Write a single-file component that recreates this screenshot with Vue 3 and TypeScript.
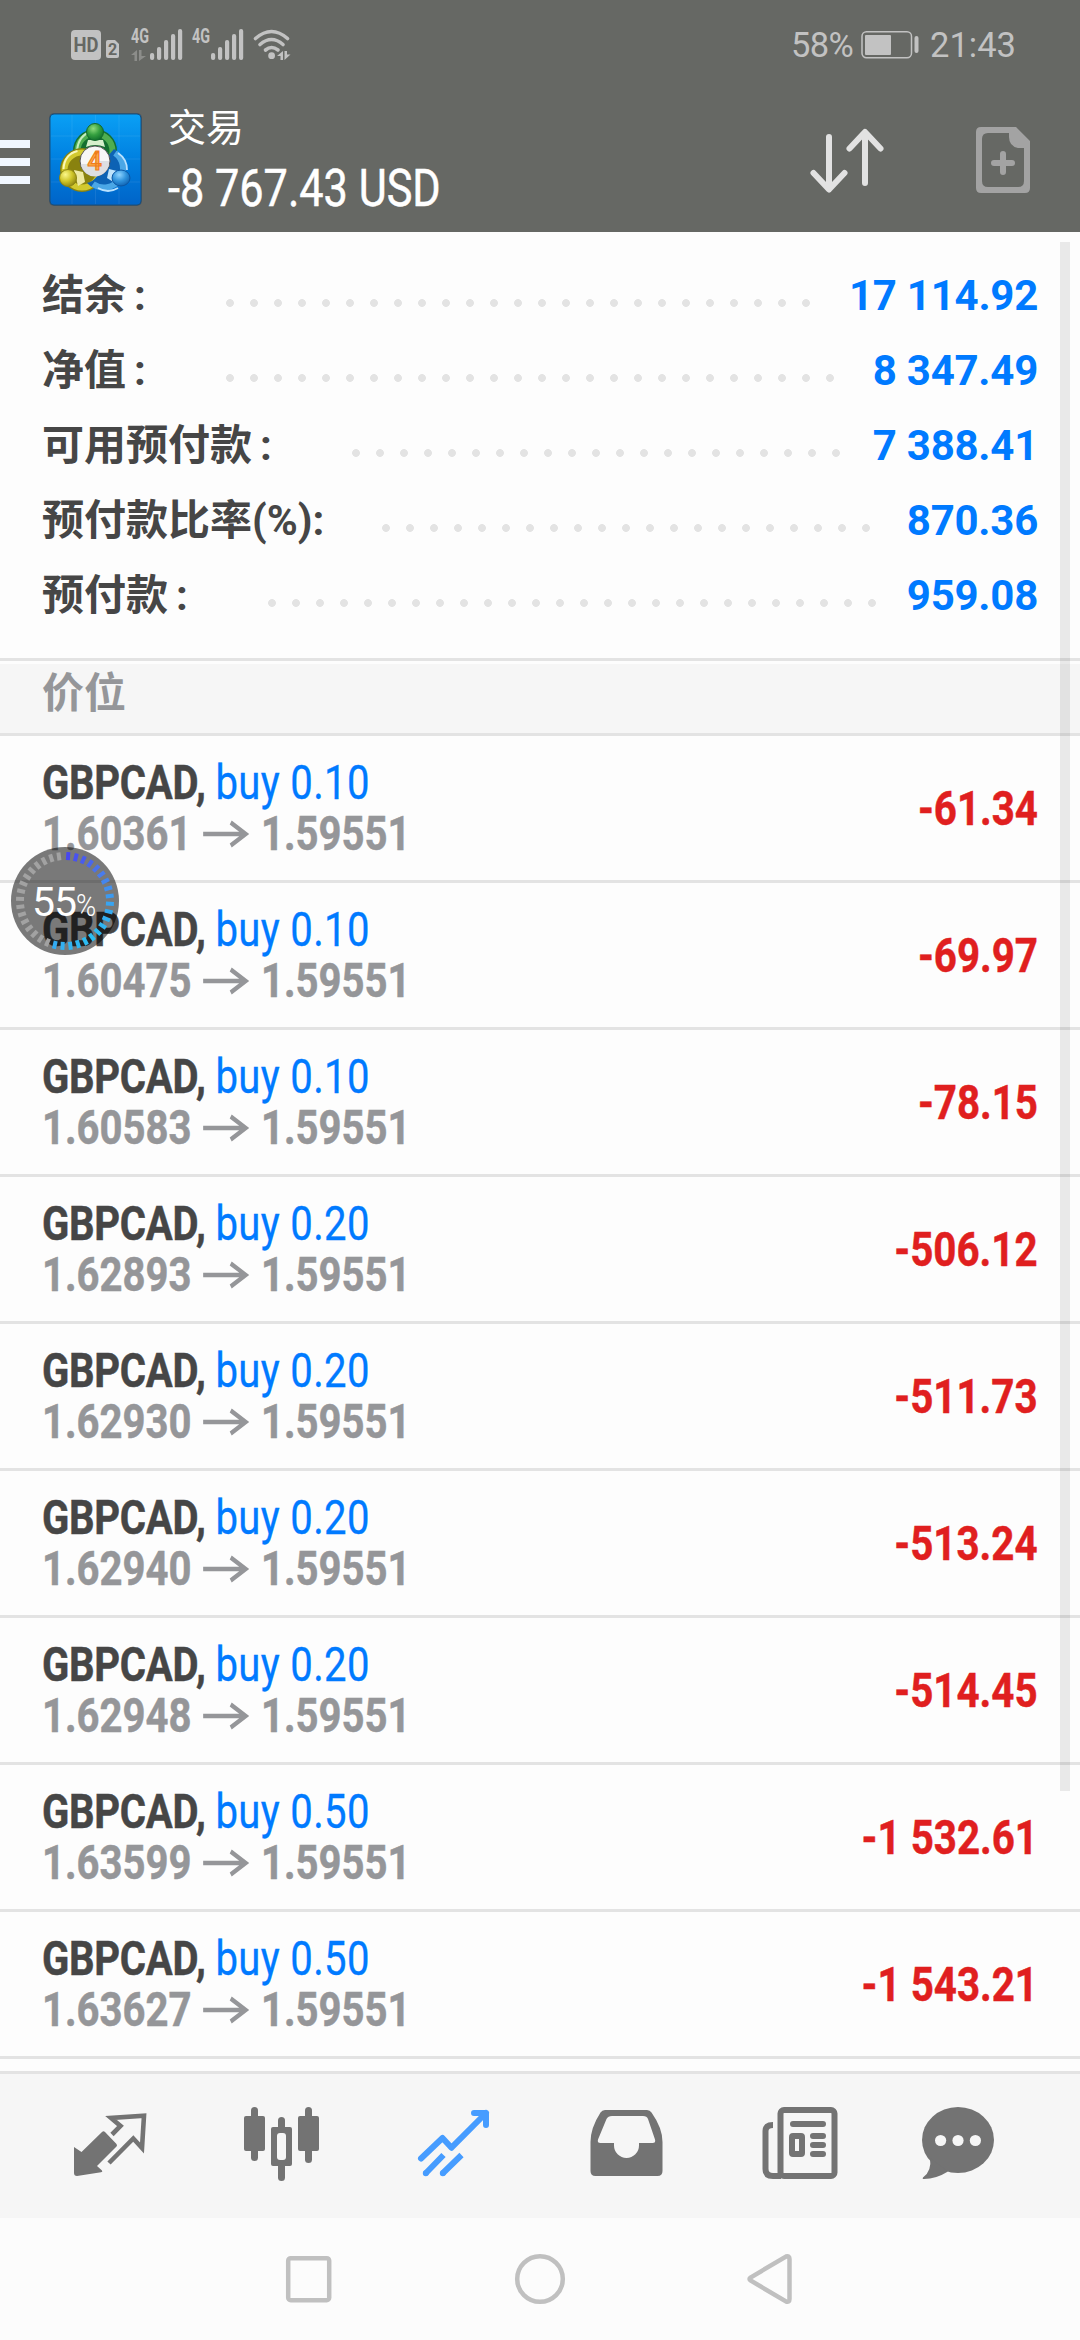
<script setup lang="ts">
interface SummaryRow {
  label: string
  wideColon: boolean
  value: string
  dots: number
}

interface Position {
  symbol: string
  side: string
  open: string
  current: string
  profit: string
}

const summary: SummaryRow[] = [
  { label: '结余', wideColon: true, value: '17 114.92', dots: 25 },
  { label: '净值', wideColon: true, value: '8 347.49', dots: 26 },
  { label: '可用预付款', wideColon: true, value: '7 388.41', dots: 21 },
  { label: '预付款比率(%)', wideColon: false, value: '870.36', dots: 21 },
  { label: '预付款', wideColon: true, value: '959.08', dots: 26 },
]

const position = (volume: string, open: string, profit: string): Position => ({
  symbol: 'GBPCAD',
  side: `buy ${volume}`,
  open,
  current: '1.59551',
  profit,
})

const positions: Position[] = [
  position('0.10', '1.60361', '-61.34'),
  position('0.10', '1.60475', '-69.97'),
  position('0.10', '1.60583', '-78.15'),
  position('0.20', '1.62893', '-506.12'),
  position('0.20', '1.62930', '-511.73'),
  position('0.20', '1.62940', '-513.24'),
  position('0.20', '1.62948', '-514.45'),
  position('0.50', '1.63599', '-1 532.61'),
  position('0.50', '1.63627', '-1 543.21'),
]

const signalBars = [
  { x: 19, top: 24 },
  { x: 26, top: 18 },
  { x: 33, top: 11 },
  { x: 40, top: 5 },
  { x: 47, top: 0 },
]

// Ring of the floating memory gauge: 20 of 36 ticks are lit.
const ringStops: [number, number, number][] = [
  [71, 71, 240],
  [74, 122, 236],
  [54, 169, 242],
  [43, 190, 242],
  [52, 172, 242],
]
const ticks = Array.from({ length: 36 }, (_, i) => {
  let color = '#a2a2a2'
  if (i < 20) {
    const t = (i / 19) * (ringStops.length - 1)
    const k = Math.min(Math.floor(t), ringStops.length - 2)
    const mix = ringStops[k].map((c, n) => Math.round(c + (ringStops[k + 1][n] - c) * (t - k)))
    color = `rgb(${mix.join(',')})`
  }
  return { angle: 4 + i * 9.95, color }
})
</script>

<template>
  <div class="screen">
    <header class="top">
      <div class="status">
        <div class="status-left">
          <svg class="hd" width="50" height="34" viewBox="0 0 50 34">
            <rect x="1" y="2" width="30" height="30" rx="4" fill="#c2c2c2" />
            <text x="16" y="24" text-anchor="middle" textLength="25" lengthAdjust="spacingAndGlyphs" font-size="20" font-weight="700" fill="#666864">HD</text>
            <path d="M38 12h7l4 4v12q0 2-2 2h-9q-2 0-2-2V14q0-2 2-2z" fill="#c2c2c2" />
            <text x="42.5" y="27" text-anchor="middle" font-size="16" font-weight="700" fill="#666864">2</text>
          </svg>
          <svg v-for="n in 2" :key="n" class="signal" width="51" height="34" viewBox="0 0 51 34">
            <text x="0" y="14.5" textLength="18" lengthAdjust="spacingAndGlyphs" font-size="19.5" font-weight="700" fill="#c2c2c2">4G</text>
            <path v-if="n === 1" d="M0 27l6-5v11H3.500v-6zM8 22h2.500v6H15l-7 5z" fill="#8c8d8a" />
            <rect v-for="bar in signalBars" :key="bar.x" :x="bar.x" :y="bar.top + 1" width="4.200" :height="31 - bar.top" rx="2" fill="#c2c2c2" />
          </svg>
          <svg width="38" height="34" viewBox="0 0 38 34">
            <g fill="none" stroke="#c2c2c2" stroke-width="3.600" stroke-linecap="round">
              <path d="M2.500 10.500Q18.500-3.500 34.500 10.500" />
              <path d="M7 16.500Q18.500 6.500 30 16.500" />
              <path d="M12.500 22Q18.500 17 25 22" />
            </g>
            <circle cx="18.600" cy="27.700" r="3.400" fill="#c2c2c2" />
            <path d="M24 28l6-5v9h-2.500v-4zM31.500 23H34v3.500h3.500l-6 5.500z" fill="#c2c2c2" />
          </svg>
        </div>
        <div class="status-right">
          <span class="percent">58%</span>
          <svg width="59" height="30" viewBox="0 0 59 30">
            <rect x="1" y="1.800" width="49.500" height="26" rx="4.500" fill="none" stroke="#c2c2c2" stroke-width="1.500" />
            <rect x="4" y="5" width="26" height="20" rx="1" fill="#c2c2c2" />
            <rect x="53.500" y="6" width="4" height="17" rx="2" fill="#c2c2c2" />
          </svg>
          <span class="clock">21:43</span>
        </div>
      </div>
      <div class="toolbar">
        <div class="burger"><i></i><i></i><i></i></div>
        <svg class="logo" width="95" height="95" viewBox="0 0 95 95">
          <defs>
            <linearGradient id="sky" x1="0" y1="0" x2="0" y2="1">
              <stop offset="0" stop-color="#0aa0f5" />
              <stop offset="0.5" stop-color="#0080e0" />
              <stop offset="1" stop-color="#0064c8" />
            </linearGradient>
            <radialGradient id="green" cx="0.4" cy="0.3" r="0.75">
              <stop offset="0" stop-color="#8fdc7c" />
              <stop offset="0.500" stop-color="#35a040" />
              <stop offset="1" stop-color="#0d6b2a" />
            </radialGradient>
            <radialGradient id="yellow" cx="0.35" cy="0.3" r="0.8">
              <stop offset="0" stop-color="#fbf78a" />
              <stop offset="0.500" stop-color="#cfc528" />
              <stop offset="1" stop-color="#857c10" />
            </radialGradient>
            <radialGradient id="blue" cx="0.4" cy="0.3" r="0.8">
              <stop offset="0" stop-color="#8fd4ff" />
              <stop offset="0.500" stop-color="#2f92dc" />
              <stop offset="1" stop-color="#0a58a8" />
            </radialGradient>
          </defs>
          <rect x="1" y="1" width="93" height="93" rx="5" fill="#4e545a" />
          <rect x="2" y="2" width="91" height="91" rx="4" fill="url(#sky)" stroke="#17507f" stroke-width="1" />
          <path d="M24 3v89M47.500 3v89M71 3v89M3 24h89M3 47h89M3 70h89" stroke="#fff" stroke-opacity="0.080" fill="none" />
          <circle cx="47" cy="39" r="22" fill="#146f30" />
          <circle cx="47" cy="39" r="17.500" fill="none" stroke="#4fae50" stroke-width="6" />
          <path d="M29 41q0-15 12-21" stroke="#c4edbd" stroke-width="2" fill="none" />
          <circle cx="34" cy="58" r="22" fill="#89820f" />
          <circle cx="34" cy="58" r="17.500" fill="none" stroke="#d2c92e" stroke-width="6" />
          <path d="M15.500 57q1-15 14-18" stroke="#faf8b8" stroke-width="2" fill="none" />
          <path d="M66 37a22 22 0 1 1-27 34q12-3 15-20z" fill="#0d62b4" />
          <path d="M67 41a18 18 0 1 1-22 31" stroke="#4ba7e6" stroke-width="6" fill="none" />
          <path d="M70 41q9 6 9 17M50 76q10 6 20 0" stroke="#b9e2ff" stroke-width="1.800" fill="none" />
          <path d="M40 28h15l2 7q-10-4-19 0z" fill="#d6f0cc" />
          <circle cx="47" cy="20" r="8.500" fill="url(#green)" stroke="#12692c" stroke-width="1" />
          <path d="M26 58l9 2 2 10-7 4z" fill="#eee9a0" />
          <circle cx="20" cy="66" r="8.500" fill="url(#yellow)" stroke="#8d8410" stroke-width="1" />
          <path d="M61 57l8 2-2 12-8-5z" fill="#bfe3fb" />
          <ellipse cx="73" cy="66" rx="9" ry="8" fill="url(#blue)" stroke="#0b57a4" stroke-width="1" />
          <circle cx="47" cy="49" r="15" fill="#f7f7f7" stroke="#555" stroke-width="1" />
          <path d="M33 52h11l4-3h13a14 14 0 0 1-28 3z" fill="#dedfe2" />
          <text x="46.500" y="58" text-anchor="middle" font-size="25" font-weight="500" fill="#fbb04c" stroke="#f07c1c" stroke-width="1.200">4</text>
        </svg>
        <div class="account">
          <span class="title">交易</span>
          <span class="balance">-8 767.43 USD</span>
        </div>
        <svg class="sort" width="80" height="72" viewBox="0 0 80 72" fill="none" stroke="#e2e2e2" stroke-width="6" stroke-linecap="round" stroke-linejoin="round">
          <path d="M22 11v52M6.500 47L22 63.500 37.500 47" />
          <path d="M58 57V7M42.500 22.500L58 6l15.500 16.500" />
        </svg>
        <svg class="add" width="54" height="66" viewBox="0 0 54 66">
          <path fill="#a3a3a3" fill-rule="evenodd" d="M5 0H40L54 14V61q0 5-5 5H5q-5 0-5-5V5Q0 0 5 0zM12 6Q6 6 6 12V54q0 6 6 6H42q6 0 6-6V21H42Q33 19 33 10V6z" />
          <path d="M27 27v18M18 36h18" stroke="#a3a3a3" stroke-width="6" stroke-linecap="round" />
        </svg>
      </div>
    </header>

    <main class="content">
      <section class="summary">
        <div v-for="row in summary" :key="row.label" class="summary-row">
          <span>{{ row.label }}<span :class="{ 'wide-colon': row.wideColon }">:</span></span>
          <span class="leader" :style="{ width: row.dots * 24 + 'px' }"></span>
          <span class="value">{{ row.value }}</span>
        </div>
      </section>
      <h2 class="section">价位</h2>
      <ul class="positions">
        <li v-for="p in positions" :key="p.open" class="position">
          <div class="info">
            <div class="deal"><b>{{ p.symbol }},</b> <span>{{ p.side }}</span></div>
            <div class="prices">
              <span class="open">{{ p.open }}</span>
              <svg width="54" height="26" viewBox="0 0 54 26" fill="none" stroke="#959699" stroke-width="4.500">
                <path d="M0 13h50M33 1.500l18 11.500-18 11.500" />
              </svg>
              <span>{{ p.current }}</span>
            </div>
          </div>
          <span class="profit">{{ p.profit }}</span>
        </li>
      </ul>
      <div class="scrollbar"></div>
    </main>

    <nav class="tabs">
      <svg viewBox="0 0 96 96">
        <path d="M12 49l7.500 5L40 34q1.500-1.500 3 0L54.500 46q1 1.500 0 2.500L35 68l5 4.500q1 1.500-1 1.800L15 78q-3 0-3-3z" fill="#737373" />
        <path d="M50 36.500L58.500 28 49 20l33-2.300L80 50l-8.700-9.500L47 65" fill="none" stroke="#737373" stroke-width="4.600" />
      </svg>
      <svg viewBox="0 0 96 96" fill="#737373">
        <rect x="10" y="18" width="21" height="35" rx="2" />
        <rect x="17" y="9" width="7" height="54" rx="3.500" />
        <rect x="64" y="18" width="21" height="35" rx="2" />
        <rect x="71" y="9" width="7" height="56" rx="3.500" />
        <rect x="44" y="19" width="7" height="64" rx="3.500" />
        <rect x="37" y="29" width="21" height="39" rx="2" />
        <rect x="43" y="35" width="9" height="27" rx="3" fill="#f6f6f6" />
      </svg>
      <svg viewBox="0 0 96 96" fill="none" stroke="#469cff" stroke-width="6" stroke-linejoin="round">
        <path d="M15 60.500L36.500 40l9 9.700L80 15M68 15h12v12" stroke-linecap="round" />
        <path d="M19.500 75.500L37.500 57M36.500 75.500L55.500 57" />
        <path d="M19.800 75.200h.01M36.800 75.200h.01" stroke-linecap="round" />
      </svg>
      <svg viewBox="0 0 96 96">
        <path fill="#737373" fill-rule="evenodd" d="M27 12H69q3 0 4.500 2.500Q84.500 30 84.500 44V73q0 5-5 5H17.500q-5 0-5-5V44Q12.500 30 22.500 14.500 24 12 27 12zM34 18q-4 0-5.500 3L20 41.500q-1 3.500 2.500 3.500H36v2.500a12.500 12.500 0 0 0 25 0V45H74.500q3.500 0 2.500-3.500L70 21q-1-3-5-3z" />
      </svg>
      <svg viewBox="0 0 96 96" fill="none" stroke="#737373" stroke-width="6">
        <rect x="30.500" y="12" width="54" height="66" rx="3.500" />
        <path d="M23 27q-7.500 0-7.500 6v38q0 7 7.500 7h8" />
        <path d="M43 26h30M63 38h10M63 47h10M63 56h10" stroke-linecap="round" />
        <rect x="42" y="38" width="10" height="18" rx="1" />
      </svg>
      <svg viewBox="0 0 96 96">
        <ellipse cx="36" cy="42" rx="36" ry="33" fill="#737373" />
        <path d="M8 60Q10 73 1 79.500 0 81 2 81 14 81 26 73.500z" fill="#737373" />
        <g fill="#f6f6f6">
          <circle cx="18.600" cy="42.500" r="5.600" />
          <circle cx="36" cy="42.500" r="5.600" />
          <circle cx="53.400" cy="42.500" r="5.600" />
        </g>
      </svg>
    </nav>

    <footer class="system">
      <svg viewBox="0 0 60 60"><rect x="9.200" y="9.200" width="41" height="42" rx="2.500" /></svg>
      <svg viewBox="0 0 60 60"><circle cx="30" cy="30" r="22.800" /></svg>
      <svg viewBox="0 0 60 60"><path d="M9.500 28.500Q7.500 30 9.500 31.500L45 52.500Q48.500 53.500 48.500 50V10Q48.500 6.500 45 7.500z" /></svg>
    </footer>

    <div class="gauge">
      <svg width="108" height="108" viewBox="0 0 108 108">
        <rect v-for="tick in ticks" :key="tick.angle" x="52" y="5" width="4" height="8" :fill="tick.color" :transform="`rotate(${tick.angle} 54 54)`" />
      </svg>
      <div class="gauge-text"><span>55</span><small>%</small></div>
    </div>
  </div>
</template>

<style>
body {
  margin: 0;
  background: #fdfdfd;
}
</style>

<style scoped>
.screen {
  position: relative;
  display: flex;
  flex-direction: column;
  width: 1080px;
  height: 2340px;
  overflow: hidden;
  background: #fdfdfd;
  font-family: Roboto, "Noto Sans CJK SC", sans-serif;
}
.screen svg {
  display: block;
  flex: none;
  overflow: visible;
}
.top {
  height: 232px;
  flex: none;
  background: #666864;
}
.status {
  display: flex;
  justify-content: space-between;
  height: 90px;
  padding: 0 66px 0 70px;
  color: #c2c2c2;
}
.status-left {
  display: flex;
  align-items: flex-start;
  padding-top: 28px;
}
.hd {
  margin-right: 11px;
}
.signal {
  margin-right: 10px;
}
.status-right {
  display: flex;
  align-items: center;
  font-size: 34.5px;
  line-height: 40px;
}
.percent {
  width: 70px;
  letter-spacing: -0.6px;
  white-space: nowrap;
}
.clock {
  width: 84px;
  margin-left: 10px;
  white-space: nowrap;
}
.toolbar {
  display: flex;
  align-items: flex-start;
  height: 142px;
}
.burger {
  display: flex;
  flex-direction: column;
  gap: 10px;
  width: 30px;
  margin: 50px 18px 0 0;
}
.burger i {
  height: 8px;
  background: #f0f7ff;
}
.logo {
  margin-top: 22px;
}
.account {
  display: flex;
  flex-direction: column;
  width: 640px;
  padding: 14px 0 0 25px;
  color: #fff;
}
.title {
  font-size: 38px;
  line-height: 48px;
}
.balance {
  align-self: flex-start;
  font-size: 51px;
  line-height: 60px;
  margin-top: 7px;
  transform: scaleX(0.848);
  transform-origin: left;
  white-space: nowrap;
  -webkit-text-stroke: 0.5px #fff;
}
.sort {
  margin: 36px 0 0 -1px;
}
.add {
  margin: 37px 0 0 89px;
}
.content {
  position: relative;
  flex: none;
  height: 1839px;
}
.summary {
  height: 429px;
  padding: 26px 42px 0;
  box-sizing: border-box;
  border-bottom: 3px solid #e3e3e3;
}
.summary-row {
  display: flex;
  align-items: center;
  height: 75px;
  color: #464646;
  font-size: 42px;
  font-weight: 700;
  line-height: 60px;
  white-space: nowrap;
}
.wide-colon {
  display: inline-block;
  width: 42px;
  padding-left: 8px;
  box-sizing: border-box;
}
.leader {
  height: 8px;
  margin: 15px 0 0 58px;
  background: radial-gradient(circle at 4px 4px, #e3e3e3 3.5px, transparent 4.3px) 0 0 / 24px 8px repeat-x;
}
.value {
  margin-left: auto;
  color: #007aff;
  letter-spacing: -0.25px;
}
.section {
  height: 69px;
  margin: 3px 0 0;
  padding-left: 42px;
  border-bottom: 3px solid #e3e3e3;
  background: #f6f6f6;
  color: #959699;
  font-size: 42px;
  font-weight: 700;
  line-height: 60px;
}
.positions {
  margin: 0;
  padding: 0;
  list-style: none;
}
.position {
  display: flex;
  justify-content: space-between;
  align-items: center;
  height: 144px;
  padding: 0 42px;
  border-bottom: 3px solid #e3e3e3;
  font-size: 48px;
  line-height: 51px;
  white-space: nowrap;
}
.info {
  transform: scaleX(0.835);
  transform-origin: left;
}
.deal {
  color: #007aff;
}
.deal b {
  color: #464646;
  letter-spacing: -0.35px;
  -webkit-text-stroke: 0.5px #464646;
}
.deal span {
  letter-spacing: 0.4px;
  -webkit-text-stroke: 0.3px #007aff;
}
.prices {
  display: flex;
  align-items: center;
  color: #959699;
  font-weight: 700;
  -webkit-text-stroke: 0.5px #959699;
}
.prices svg {
  margin: 0 15px 0 14px;
}
.profit {
  color: #e01f1f;
  font-weight: 700;
  transform: scaleX(0.84);
  transform-origin: right;
  -webkit-text-stroke: 0.5px #e01f1f;
}
.scrollbar {
  position: absolute;
  top: 10px;
  right: 10px;
  width: 10px;
  height: 1549px;
  background: rgba(0, 0, 0, 0.08);
}
.tabs {
  display: flex;
  align-items: center;
  justify-content: space-around;
  flex: none;
  height: 144px;
  padding: 0 24px;
  border-top: 3px solid #e3e3e3;
  background: #f6f6f6;
}
.tabs svg {
  width: 96px;
  height: 96px;
}
.system {
  display: flex;
  align-items: center;
  justify-content: center;
  gap: 171px;
  flex: 1;
  background: #fcfcfc;
}
.system svg {
  width: 60px;
  height: 60px;
  fill: none;
  stroke: #c0c0c0;
  stroke-width: 4.5px;
}
.gauge {
  position: absolute;
  left: 11px;
  top: 847px;
  width: 108px;
  height: 108px;
  border-radius: 50%;
  background: rgba(0, 0, 0, 0.52);
}
.gauge-text {
  position: absolute;
  left: 21px;
  top: 32px;
  display: flex;
  align-items: baseline;
  color: #fff;
  font-size: 41px;
  line-height: 46px;
  letter-spacing: -1px;
}
.gauge-text small {
  font-size: 31px;
  font-weight: 300;
  transform: scaleX(0.88);
  transform-origin: left;
}
</style>
